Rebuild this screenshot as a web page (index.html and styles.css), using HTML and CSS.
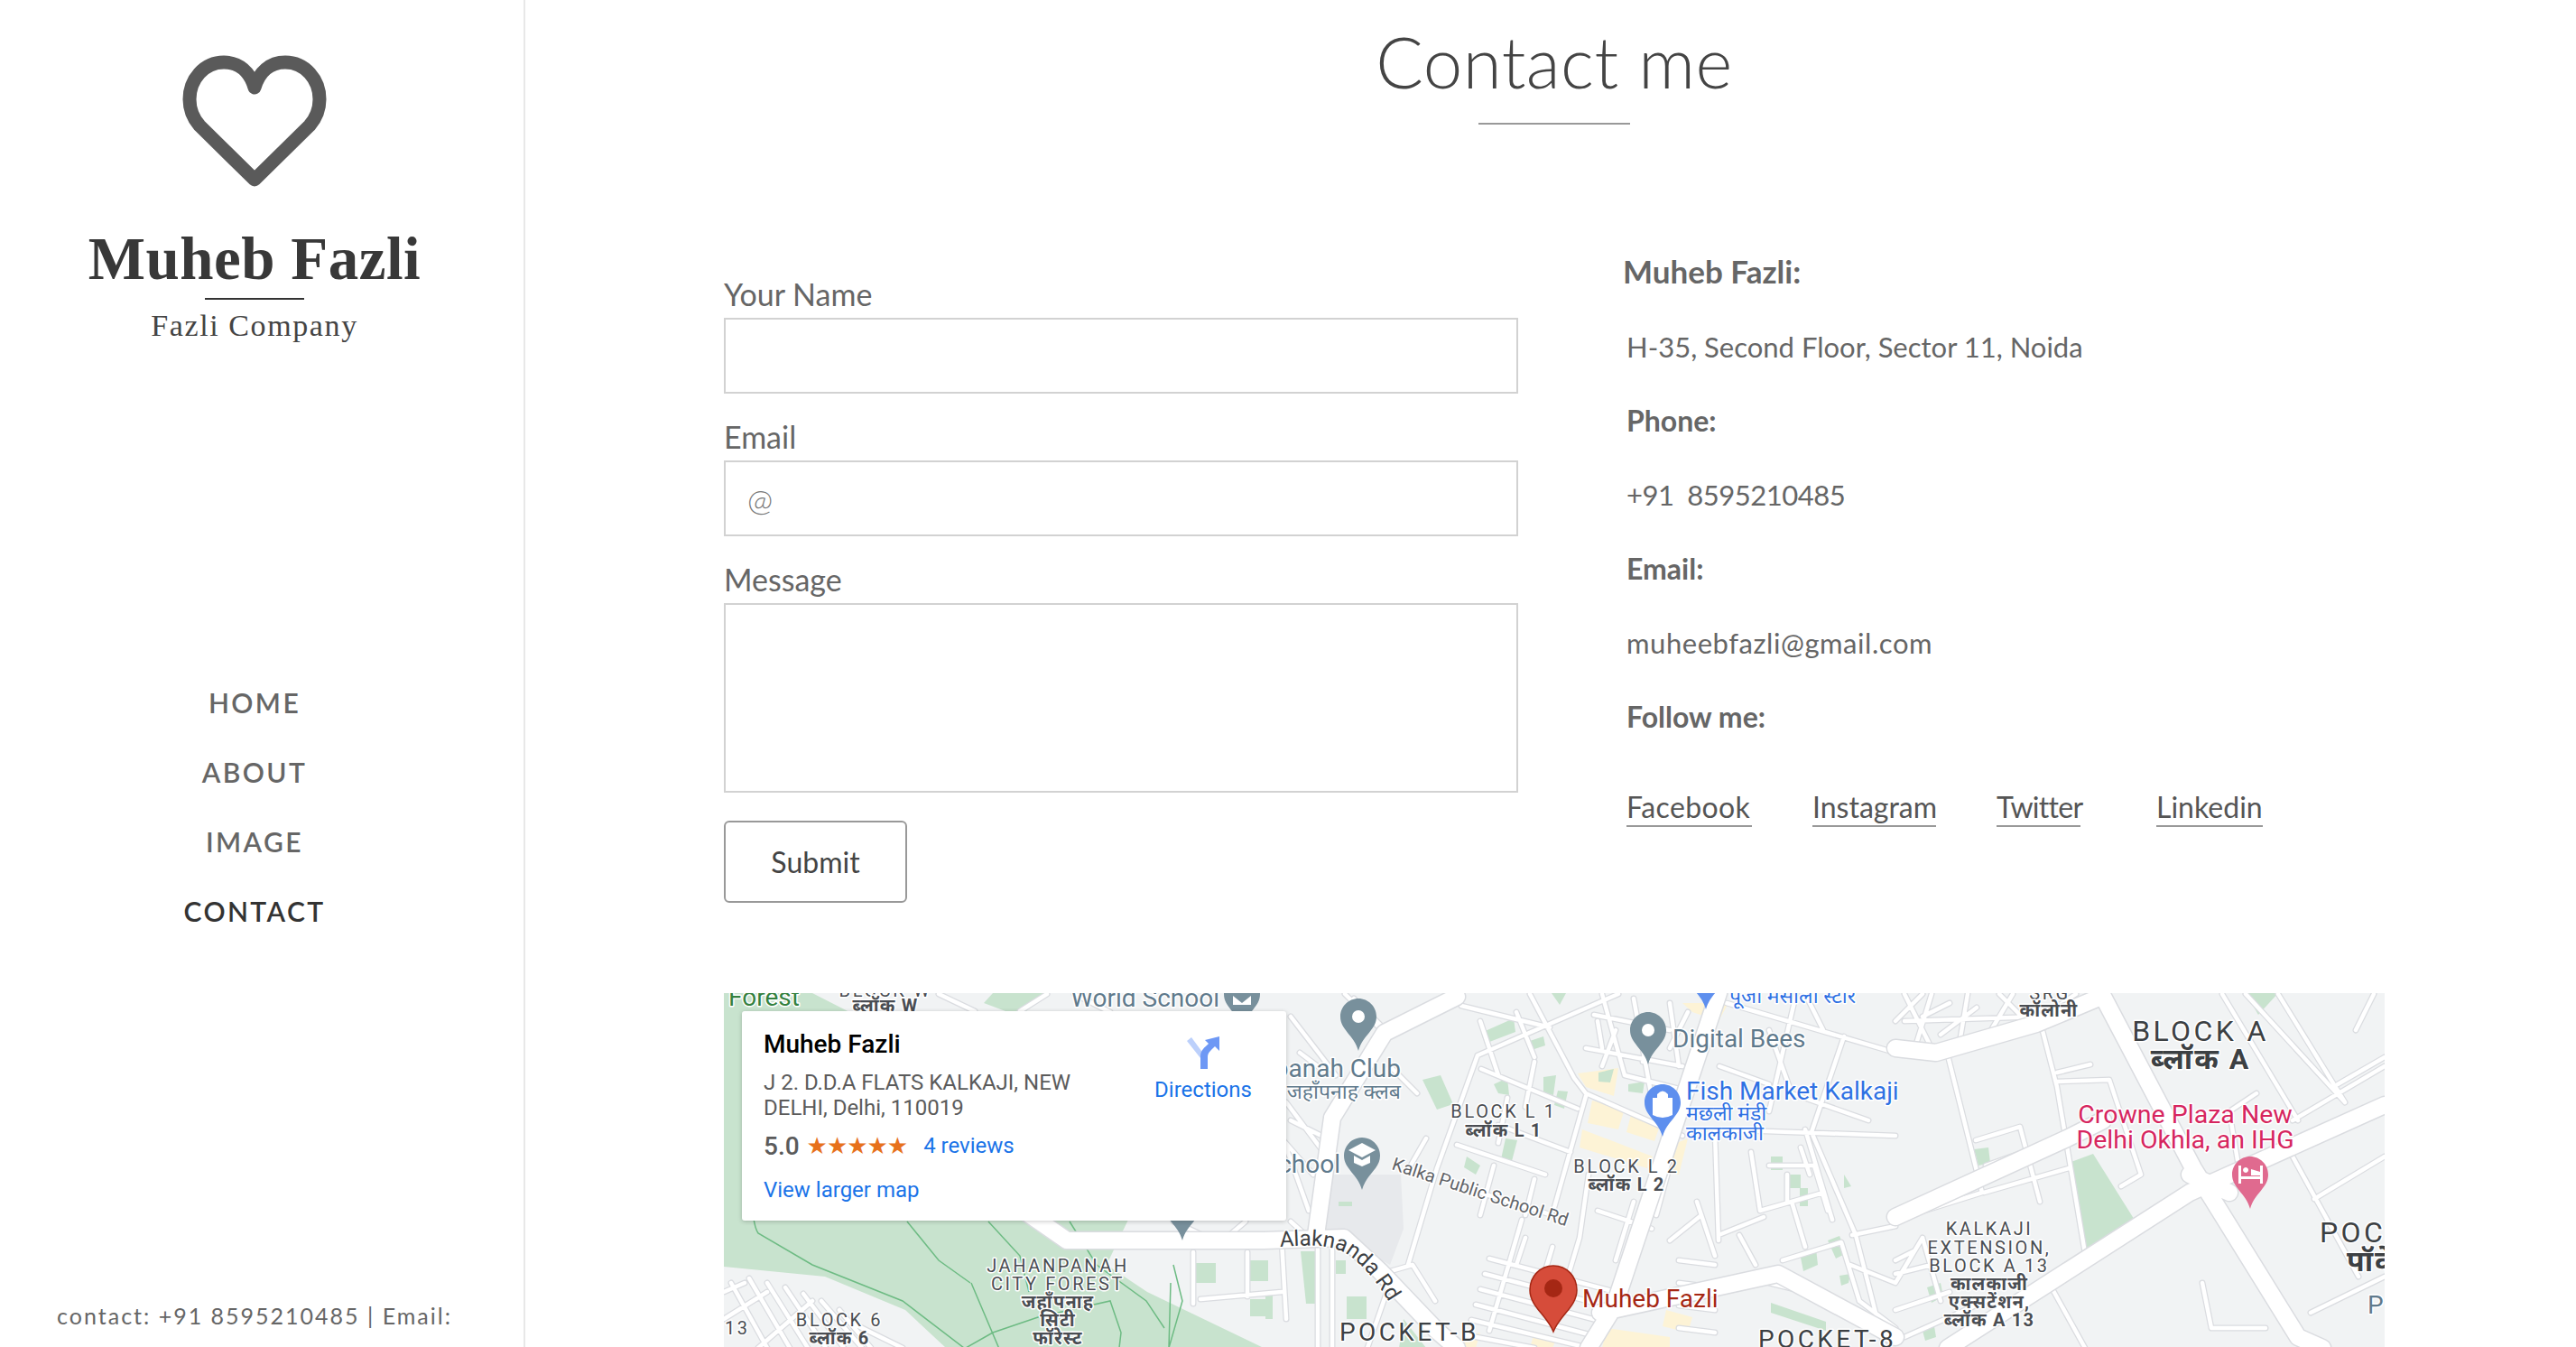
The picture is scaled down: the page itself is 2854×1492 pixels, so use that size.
FILE: index.html
```html
<!DOCTYPE html>
<html lang="en">
<head>
<meta charset="utf-8">
<title>Contact me</title>
<link rel="stylesheet" href="styles.css">
</head>
<body>
<div class="page">
  <aside class="sidebar">
    <div class="brand">
      <svg class="heart" viewBox="195 55 174 160" width="174" height="160"><path d="M282 97C277 80 265 69 248 69C226 69 210 88 210 110C210 122 214 131 221 139L282 199L343 139C350 131 354 122 354 110C354 88 338 69 316 69C299 69 287 80 282 97Z"/></svg>
      <div class="brand-name">Muheb Fazli</div>
      <div class="brand-rule"></div>
      <div class="brand-tag">Fazli Company</div>
    </div>
    <nav class="nav">
      <a href="#">HOME</a>
      <a href="#">ABOUT</a>
      <a href="#">IMAGE</a>
      <a href="#" class="active">CONTACT</a>
    </nav>
    <p class="foot">contact: +91 8595210485 | Email: muheebfazli@gmail.com</p>
  </aside>
  <main class="main">
    <header class="head">
      <h1>Contact me</h1>
      <div class="head-rule"></div>
    </header>
    <section class="cols">
      <form class="form">
        <label>Your Name</label>
        <input type="text">
        <label>Email</label>
        <input type="email" placeholder="@">
        <label>Message</label>
        <textarea></textarea>
        <button type="button">Submit</button>
      </form>
      <div class="info">
        <p class="b first">Muheb Fazli:</p>
        <p>H-35, Second Floor, Sector 11, Noida</p>
        <p class="b">Phone:</p>
        <p class="tel">+91&nbsp; 8595210485</p>
        <p class="b">Email:</p>
        <p class="mail">muheebfazli@gmail.com</p>
        <p class="b">Follow me:</p>
        <div class="social">
          <a href="#" class="s1">Facebook</a>
          <a href="#" class="s2">Instagram</a>
          <a href="#" class="s3">Twitter</a>
          <a href="#" class="s4">Linkedin</a>
        </div>
      </div>
    </section>
    <div class="map">
      <svg class="map-svg" viewBox="802 1099 1840 393" width="1840" height="393">
        <defs>
          <path id="pin" d="M20 0C9 0 0 9 0 20C0 35 15 40 20 58C25 40 40 35 40 20C40 9 31 0 20 0Z"/>
          <path id="minor" d="M1637 1168L1793 1100M1637 1168L1592 1293L1560 1400M1695 1100L1744 1193L1757 1210L1864 1257M1757 1213L1721 1340M1686 1350L1650 1473M1614 1267L1712 1300M1641 1183L1748 1227M1619 1113L1717 1137M1640 1130L1660 1190M1680 1120L1700 1170M1757 1160L1864 1180M1766 1123L1850 1140M1775 1100L1800 1190M1810 1105L1830 1215M1850 1110L1860 1180M1775 1160L1770 1130M1913 1110L2100 1165M2043 1147L2007 1253L2056 1367L2088 1492M1900 1253L1904 1373M1900 1250L2100 1257M1904 1367L1954 1347M1927 1367L1945 1400M2052 1367L2100 1357M1960 1230L1990 1100M1960 1140L1985 1210L2070 1240M1985 1330L2000 1380M1940 1275L1950 1340L2020 1320M2000 1250L2030 1350M1880 1330L1900 1390M1850 1373L1885 1345M1860 1395L1900 1400M1860 1420L1900 1425M1860 1445L1900 1450M1860 1470L1900 1475M2100 1160L2145 1165M2158 1168L2196 1320M2261 1133L2279 1203L2310 1387M2279 1197L2337 1195L2372 1300L2350 1313M2279 1187L2316 1178M2189 1262L2238 1247L2260 1330M2196 1320L2100 1350M2198 1320L2292 1293M2200 1290L2285 1260M2462 1100L2546 1240M2488 1100L2598 1220M2524 1100L2598 1220M2540 1280L2613 1413M2564 1327L2642 1280M2560 1453L2642 1413M2540 1240L2642 1180M2274 1427L2310 1492M2500 1210L2470 1230L2480 1290M2440 1420L2450 1470L2510 1470M2590 1200L2642 1170M2630 1100L2610 1140M2000 1100L2020 1140M2100 1130L2130 1100M2120 1165L2140 1100M2170 1160L2180 1100M2200 1150L2230 1100M2110 1130L2260 1125M2130 1370L2100 1420M2130 1370L2150 1440M2100 1450L2160 1430M2110 1480L2200 1440M1470 1260L1430 1240M1540 1145L1500 1105M1430 1125L1480 1190M1425 1220L1470 1280M1425 1270L1450 1340M1490 1100L1534 1143M1380 1352L1355 1373M1300 1352L1345 1373M1430 1352L1450 1370M1190 1100L1230 1120M1040 1100L1080 1119M1160 1100L1130 1119M1322 1386V1443M1382 1386V1435M1330 1438L1420 1430M1420 1373L1425 1460M1460 1370V1492M1476 1380V1492M1530 1410L1565 1400L1590 1440M1515 1492L1540 1420M1650 1393L1790 1430M1645 1410L1785 1447M1640 1427L1780 1464M1635 1444L1775 1481M1630 1461L1760 1492M1625 1478L1700 1492M1690 1370L1680 1400M1720 1380L1705 1430M1750 1370L1735 1420M810 1420L850 1492M830 1415L875 1492M850 1420L895 1492M870 1425L915 1492M890 1432L935 1492M910 1440L955 1492M930 1450L965 1492M802 1430L825 1420M802 1460L850 1430M840 1492L900 1440M945 1465L1000 1492M1960 1290H2010L2025 1340M1980 1300V1330M1995 1270L2005 1300M1975 1395L2040 1375M2040 1375L2060 1440M1960 1420L2040 1440M2050 1400L2100 1420M2060 1440L2100 1470M2120 1385L2100 1395M2140 1400L2100 1410M2110 1100L2140 1160M2130 1125L2160 1110M2150 1145L2190 1115M2215 1100L2245 1130M2300 1100L2270 1120M1870 1120L1850 1160M1790 1140L1775 1180M1830 1130L1820 1175M1800 1190L1860 1205M1905 1180L1960 1200M1700 1175L1690 1225M1670 1215L1660 1265M1660 1245L1740 1275M1640 1320L1720 1345M1655 1290L1640 1345M1700 1305L1690 1345M1760 1300L1750 1370M1810 1330L1790 1395M1850 1290L1835 1345M1770 1340L1830 1360M1540 1180L1570 1210M1580 1260L1560 1295M1440 1165L1460 1180M1420 1260L1455 1300"/>
          <path id="a-rd" d="M1418 1380C1450 1378 1478 1376 1498 1392C1515 1405 1530 1425 1546 1453"/>
          <path id="k-rd" d="M1541 1294L1780 1372"/>
        </defs>
        <rect x="802" y="1099" width="1840" height="393" class="m-bg"/>
        <path class="m-green" d="M802 1099H900L1000 1150L1250 1350L1226 1400L1271 1430L1400 1492H1048L1003 1450L914 1413L802 1402Z"/>
        <path class="m-green" d="M1100 1099H1160L1130 1125L1090 1110Z"/>
        <path class="m-gray" d="M1467 1300H1552L1555 1360L1540 1400L1467 1360Z"/>
        <g class="m-yellow">
          <path d="M1764 1218L1800 1227L1793 1250L1759 1243Z"/><path d="M1808 1230L1840 1243L1833 1263L1802 1253Z"/><path d="M1753 1250L1831 1280L1825 1293L1750 1270Z"/><path d="M1748 1188L1793 1182L1788 1213L1757 1203Z"/><path d="M1864 1110H1915L1904 1130L1875 1120Z"/><path d="M1845 1270L1870 1260L1860 1300L1840 1295Z"/><path d="M1700 1475L1725 1480L1720 1492H1695Z"/><path d="M1846 1450L1875 1458L1870 1475L1842 1468Z"/><path d="M1780 1470L1850 1480L1850 1492H1775Z"/><path d="M1620 1480L1640 1475L1635 1492H1610Z"/>
        </g>
        <g class="m-patch">
          <path d="M1322 1398H1347V1420H1322Z"/><path d="M1380 1395H1405V1418H1380Z"/><path d="M1385 1438H1409V1457H1385Z"/><path d="M1441 1385H1463L1458 1443H1447Z"/><path d="M1492 1435H1514V1460H1492Z"/><path d="M1480 1395H1491V1410H1480Z"/><path d="M1483 1330H1498V1335H1483Z"/><path d="M1402 1430H1410V1460H1402Z"/><path d="M1576 1195L1596 1190L1610 1222L1592 1228Z"/><path d="M1641 1143L1677 1127L1679 1142L1645 1155Z"/><path d="M1692 1153L1710 1147L1712 1157L1697 1162Z"/><path d="M1655 1200L1670 1193L1672 1212L1660 1210Z"/><path d="M1710 1192L1724 1190L1721 1212L1710 1210Z"/><path d="M1726 1207L1737 1208L1733 1227L1722 1223Z"/><path d="M1771 1187L1788 1183L1784 1198L1771 1197Z"/><path d="M1804 1200L1822 1197L1820 1210L1804 1208Z"/><path d="M1668 1260L1681 1262L1675 1285L1663 1283Z"/><path d="M1625 1280L1640 1290L1635 1300L1622 1292Z"/><path d="M1719 1099H1735L1728 1112Z"/><path d="M2043 1300L2051 1313L2043 1315Z"/><path d="M1962 1280H1975V1295H1962Z"/><path d="M1980 1300H1995V1315H1980Z"/><path d="M1994 1315H2003V1335H1994Z"/><path d="M1994 1387L2012 1382L2014 1400L1998 1407Z"/><path d="M2025 1373L2038 1368L2046 1387L2034 1393Z"/><path d="M2038 1412L2050 1410L2048 1420L2040 1423Z"/><path d="M1962 1442L2023 1463V1473L1962 1453Z"/><path d="M2488 1099H2524L2502 1123Z"/><path d="M2292 1287L2319 1277L2366 1352L2312 1383Z"/><path d="M2187 1272L2203 1270L2205 1287L2192 1290Z"/><path d="M2135 1425L2150 1420L2153 1435L2140 1442Z"/><path d="M2130 1473L2143 1468L2145 1480L2133 1484Z"/><path d="M1555 1460L1580 1492H1550Z"/>
        </g>
        <path class="m-lg" d="M824 1250C835 1300 830 1350 840 1365L900 1400L1000 1440L1085 1505M1005 1352L1040 1395L1075 1420M1095 1352L1130 1390L1140 1430M1185 1352L1215 1400L1270 1440L1290 1470M1076 1420L1110 1500M1100 1475L1150 1458L1230 1440L1242 1475L1240 1492M1100 1475L1070 1492M1297 1420L1295 1492L1310 1440L1300 1400"/>
        <g class="m-road">
          <use href="#minor" class="r-case"/>
          <use href="#minor" class="r-fill"/>
        </g>
        <g class="m-road wide">
          <path class="r-case" d="M1904 1099L1788 1447L1760 1492M1182 1373L1400 1373L1489 1370L1529 1407L1592 1473L1614 1492M1476 1237L1458 1367M1534 1143L1476 1237M1614 1103L1534 1143M2328 1099L2430 1293L2546 1480L2573 1492M2158 1492L2426 1320L2642 1223M2100 1160L2145 1165L2256 1133L2328 1103M2100 1347L2290 1260L2330 1240M1773 1453L1970 1410L2100 1480M1182 1373L1120 1330M2426 1300L2470 1320"/>
          <path class="r-fill" d="M1904 1099L1788 1447L1760 1492M1182 1373L1400 1373L1489 1370L1529 1407L1592 1473L1614 1492M1476 1237L1458 1367M1534 1143L1476 1237M1614 1103L1534 1143M2328 1099L2430 1293L2546 1480L2573 1492M2158 1492L2426 1320L2642 1223M2100 1160L2145 1165L2256 1133L2328 1103M2100 1347L2290 1260L2330 1240M1773 1453L1970 1410L2100 1480M1182 1373L1120 1330M2426 1300L2470 1320"/>
        </g>
        <use href="#pin" x="1290" y="1315" class="p-gray"/>
        <use href="#pin" x="1356" y="1080" class="p-gray"/>
        <use href="#pin" x="1485" y="1105" class="p-gray"/>
        <use href="#pin" x="1489" y="1259" class="p-gray"/>
        <use href="#pin" x="1806" y="1120" class="p-gray"/>
        <use href="#pin" x="1822" y="1200" class="p-blue"/>
        <use href="#pin" x="1870" y="1059" class="p-blue"/>
        <use href="#pin" x="2473" y="1280" class="p-pink"/>
        <path class="m-dot" d="M1366 1102L1376 1110L1386 1102V1112H1366Z"/>
        <circle cx="1505" cy="1125" r="7" class="m-dot"/>
        <circle cx="1826" cy="1140" r="7" class="m-dot"/>
        <path class="m-dot" d="M1509 1265L1524 1273L1509 1281L1494 1273ZM1500 1279L1509 1284L1518 1279V1287L1509 1291L1500 1287Z"/>
        <path class="m-dot" d="M1831 1215H1853V1234Q1842 1240 1831 1234ZM1836 1215V1211Q1842 1204 1848 1211V1215" />
        <path class="m-dot" d="M2480 1290V1310H2483V1305H2504V1310H2507V1290H2504V1302H2483V1290ZM2488 1292A3 3 0 1 0 2488.1 1292ZM2494 1294L2504 1297V1301H2494Z"/>
        <path class="p-red" d="M1721 1401C1706 1401 1695 1413 1695 1428C1695 1446 1714 1456 1721 1474C1728 1456 1747 1446 1747 1428C1747 1413 1736 1401 1721 1401Z"/>
        <circle cx="1721" cy="1426" r="10" class="red-dot"/>

        <g class="t">
          <text x="807" y="1113" class="t-green">Forest</text>
          <text x="981" y="1103" class="t-area" text-anchor="middle">BLOCK W</text>
          <text x="981" y="1120" class="t-area hi" text-anchor="middle">ब्लॉक W</text>
          <text x="1351" y="1114" class="t-poi" text-anchor="end">World School</text>
          <text x="1552" y="1192" class="t-poi" text-anchor="end">Jahanpanah Club</text>
          <text x="1552" y="1216" class="t-poi-s" text-anchor="end">जहाँपनाह क्लब</text>
          <text x="1485" y="1298" class="t-poi" text-anchor="end">Kalka Public School</text>
          <text x="1853" y="1159" class="t-poi">Digital Bees</text>
          <text x="1868" y="1217" class="t-blue">Fish Market Kalkaji</text>
          <text x="1868" y="1240" class="t-blue-s">मछली मंडी</text>
          <text x="1868" y="1262" class="t-blue-s">कालकाजी</text>
          <text x="1916" y="1110" class="t-blue-s">पूजा मसाला स्टोर</text>
          <text x="1753" y="1447" class="t-red">Muheb Fazli</text>
          <text x="1172" y="1408" class="t-area" text-anchor="middle">JAHANPANAH</text>
          <text x="1172" y="1428" class="t-area" text-anchor="middle">CITY FOREST</text>
          <text x="1172" y="1448" class="t-area hi" text-anchor="middle">जहाँपनाह</text>
          <text x="1172" y="1468" class="t-area hi" text-anchor="middle">सिटी</text>
          <text x="1172" y="1488" class="t-area hi" text-anchor="middle">फॉरेस्ट</text>
          <text x="930" y="1468" class="t-area" text-anchor="middle">BLOCK 6</text>
          <text x="930" y="1488" class="t-area hi" text-anchor="middle">ब्लॉक 6</text>
          <text x="803" y="1477" class="t-area">13</text>
          <text x="1666" y="1237" class="t-area" text-anchor="middle">BLOCK L 1</text>
          <text x="1666" y="1258" class="t-area hi" text-anchor="middle">ब्लॉक L 1</text>
          <text x="1802" y="1298" class="t-area" text-anchor="middle">BLOCK L 2</text>
          <text x="1802" y="1318" class="t-area hi" text-anchor="middle">ब्लॉक L 2</text>
          <text x="1484" y="1484" class="t-big">POCKET-B</text>
          <text x="1948" y="1492" class="t-big">POCKET-8</text>
          <text x="2271" y="1106" class="t-area" text-anchor="middle">SRG</text>
          <text x="2270" y="1125" class="t-area hi" text-anchor="middle">कॉलोनी</text>
          <text x="2438" y="1152" class="t-large" text-anchor="middle">BLOCK A</text>
          <text x="2438" y="1183" class="t-large hi" text-anchor="middle">ब्लॉक A</text>
          <text x="2421" y="1243" class="t-pink" text-anchor="middle">Crowne Plaza New</text>
          <text x="2421" y="1271" class="t-pink" text-anchor="middle">Delhi Okhla, an IHG</text>
          <text x="2204" y="1367" class="t-area" text-anchor="middle">KALKAJI</text>
          <text x="2204" y="1388" class="t-area" text-anchor="middle">EXTENSION,</text>
          <text x="2204" y="1408" class="t-area" text-anchor="middle">BLOCK A 13</text>
          <text x="2204" y="1428" class="t-area hi" text-anchor="middle">कालकाजी</text>
          <text x="2204" y="1448" class="t-area hi" text-anchor="middle">एक्सटेंशन,</text>
          <text x="2204" y="1468" class="t-area hi" text-anchor="middle">ब्लॉक A 13</text>
          <text x="2570" y="1375" class="t-large">POCKET</text>
          <text x="2600" y="1407" class="t-large hi">पॉकेट</text>
          <text x="2623" y="1454" class="t-poi">P</text>
          <text class="t-road"><textPath href="#a-rd">Alaknanda Rd</textPath></text>
          <text class="t-road small"><textPath href="#k-rd">Kalka Public School Rd</textPath></text>
        </g>
      </svg>
      <div class="card">
        <div class="card-left">
          <div class="card-title">Muheb Fazli</div>
          <div class="card-addr">J 2. D.D.A FLATS KALKAJI, NEW DELHI, Delhi, 110019</div>
          <div class="card-rate"><span class="score">5.0</span><span class="stars">★★★★★</span><a href="#">4 reviews</a></div>
          <a href="#" class="larger">View larger map</a>
        </div>
        <a href="#" class="dir">
          <svg viewBox="0 0 36 36" width="36" height="36"><path class="d1" d="M0 5L5 1L19 20V24H15Z"/><path class="d2" d="M15 36V22C15 15 20 12 24 8L20 4L36 0V16L31 11C26 16 23 18 23 23V36Z"/></svg>
          <span>Directions</span>
        </a>
      </div>
    </div>
  </main>
</div>
</body>
</html>
```
FILE: styles.css
```css
* { box-sizing: border-box; }
html, body { margin: 0; height: 100%; overflow: hidden; background: #fff; }
body { font-family: Lato, "Noto Sans", sans-serif; color: #666; }
.page { display: flex; height: 1492px; overflow: hidden; }

.sidebar { width: 582px; flex: none; height: 1492px; border-right: 2px solid #e8e8e8; padding-right: 16px; display: flex; flex-direction: column; align-items: center; overflow: hidden; }
.brand { display: flex; flex-direction: column; align-items: center; padding-top: 55px; }
.heart { display: block; }
.heart path { fill: none; stroke: #5a5a5a; stroke-width: 15; stroke-linejoin: round; }
.brand-name { font-family: "Liberation Serif", serif; font-weight: 700; font-size: 67px; line-height: 76px; color: #383838; letter-spacing: .5px; margin-top: 33px; }
.brand-rule { width: 110px; height: 2px; background: #333; margin-top: 6px; }
.brand-tag { font-family: "Liberation Serif", serif; font-size: 34px; line-height: 40px; letter-spacing: 1.6px; color: #444; margin-top: 9px; }
.nav { display: flex; flex-direction: column; align-items: center; gap: 43px; margin-top: 380px; }
.nav a { font-size: 30px; line-height: 34px; letter-spacing: 2.4px; color: #666; text-decoration: none; font-weight: 600; }
.nav a.active { color: #333; }
.foot { margin: 406px 0 0; width: 470px; text-align: center; font-size: 25px; line-height: 50px; letter-spacing: 2px; color: #666; }

.main { flex: 1; min-width: 0; padding: 0 212px 0 220px; overflow: hidden; height: 1492px; }
.head { display: flex; flex-direction: column; align-items: center; }
.head h1 { margin: 21px 0 0; font-weight: 300; font-size: 78px; line-height: 94px; color: #444; letter-spacing: .5px; }
.head-rule { width: 168px; height: 2px; background: #999; margin-top: 21px; }

.cols { display: flex; margin-top: 144px; }
.form { width: 880px; flex: none; display: flex; flex-direction: column; padding-top: 24px; }
.form label { font-size: 34px; line-height: 40px; color: #666; margin-bottom: 6px; }
.form input, .form textarea { display: block; width: 100%; height: 84px; border: 2px solid #d2d2d2; border-radius: 0; padding: 0 24px; margin: 0 0 28px; font: 34px Lato, sans-serif; background: #fff; outline: 0; }
.form input::placeholder { color: #777; opacity: 1; font-weight: 300; }
.form textarea { height: 210px; resize: none; margin-bottom: 31px; }
.form button { width: 203px; height: 91px; background: #fff; border: 2px solid #999; border-radius: 6px; font: 32px Lato, sans-serif; color: #444; padding: 0; }

.info { margin-left: 116px; flex: 1; min-width: 0; font-size: 31px; line-height: 40px; color: #666; }
.info p { margin: 0 0 42px 4px; }
.info p.b { font-weight: 700; font-size: 32px; }
.info p.first { margin: -2px 0 44px; font-size: 35px; }
.info p.tel { letter-spacing: -.5px; }
.info p.mail { letter-spacing: .55px; }
.social { display: flex; margin: 60px 0 0 4px; font-size: 32px; }
.social a { color: #555; text-decoration: none; padding-bottom: 0; border-bottom: 2px solid #999; display: block; }
.s1 { width: 139px; letter-spacing: .4px; } .s2 { width: 137px; margin-left: 67px; } .s3 { width: 93px; margin-left: 67px; letter-spacing: -.7px; } .s4 { width: 118px; margin-left: 84px; }

.map { position: relative; margin-top: 100px; width: 1840px; height: 393px; overflow: hidden; }
.map-svg { display: block; }
.m-bg { fill: #f1f3f4; }
.m-green, .m-patch { fill: #c8e3ce; }
.m-gray { fill: #e7e9ec; }
.m-yellow { fill: #fdf3d6; }
.m-lg { fill: none; stroke: #6dbb83; stroke-width: 1.5; }
.m-road use, .m-road path { fill: none; stroke-linecap: round; stroke-linejoin: round; }
.m-road .r-case { stroke: #dadce0; stroke-width: 7; }
.m-road .r-fill { stroke: #fff; stroke-width: 4.5; }
.m-road.wide .r-case { stroke-width: 21; }
.m-road.wide .r-fill { stroke-width: 18; }
.p-gray { fill: #78909c; }
.p-blue { fill: #5e8fee; }
.p-pink { fill: #e06a8f; }
.p-red { fill: #d64c3a; stroke: #a52714; stroke-width: 1.5; }
.red-dot { fill: #a52714; }
.m-dot { fill: #fff; }
.t text { font-family: Roboto, "Noto Sans", sans-serif; paint-order: stroke; stroke: #fff; stroke-width: 3px; stroke-linejoin: round; }
.t-green { font-size: 28px; fill: #34813f; }
.t-area { font-size: 20px; letter-spacing: 2.6px; fill: #4a4d52; }
.t-area.hi { font-weight: 700; letter-spacing: 1.2px; }
.t-poi { font-size: 28px; fill: #5f7a8c; }
.t-poi-s { font-size: 23px; fill: #5f7a8c; }
.t-blue { font-size: 28px; fill: #2f71e3; }
.t-blue-s { font-size: 23px; fill: #2f71e3; }
.t-red { font-size: 28px; fill: #a52714; }
.t-pink { font-size: 28.5px; fill: #d6265f; }
.t-big { font-size: 28px; letter-spacing: 3.4px; fill: #3c4043; }
.t-large { font-size: 32px; letter-spacing: 3.4px; fill: #3c4043; }
.t-large.hi { font-weight: 700; letter-spacing: 2px; }
.t-road { font-size: 24px; fill: #3c4043; }
.t-road.small { font-size: 20px; fill: #5f6368; }

.card { position: absolute; left: 20px; top: 20px; width: 603px; height: 232px; background: #fff; border-radius: 3px; box-shadow: 0 1px 5px rgba(0,0,0,.22); display: flex; font-family: Roboto, sans-serif; padding: 20px 0 0 24px; }
.card-left { width: 410px; flex: none; }
.card-title { font-size: 28px; line-height: 34px; font-weight: 500; color: #000; }
.card-addr { font-size: 24px; line-height: 28px; color: #5b5b5b; margin-top: 11px; }
.card-rate { display: flex; align-items: center; margin-top: 10px; height: 36px; }
.score { font-size: 28px; font-weight: 500; color: #5b5b5b; }
.stars { font-family: "DejaVu Sans", sans-serif; font-size: 26px; color: #e7711b; margin-left: 8px; letter-spacing: -1px; }
.card-rate a { font-size: 24px; color: #1a73e8; text-decoration: none; margin-left: 18px; }
.larger { display: block; font-size: 24px; line-height: 30px; color: #1a73e8; text-decoration: none; margin-top: 16px; }
.dir { margin-left: 23px; display: flex; flex-direction: column; align-items: center; width: 108px; text-decoration: none; color: #1a73e8; font-size: 24px; line-height: 30px; padding-top: 8px; }
.dir svg { margin-bottom: 8px; }
.d1 { fill: #bcd0fb; }
.d2 { fill: #6e98f5; }
```
